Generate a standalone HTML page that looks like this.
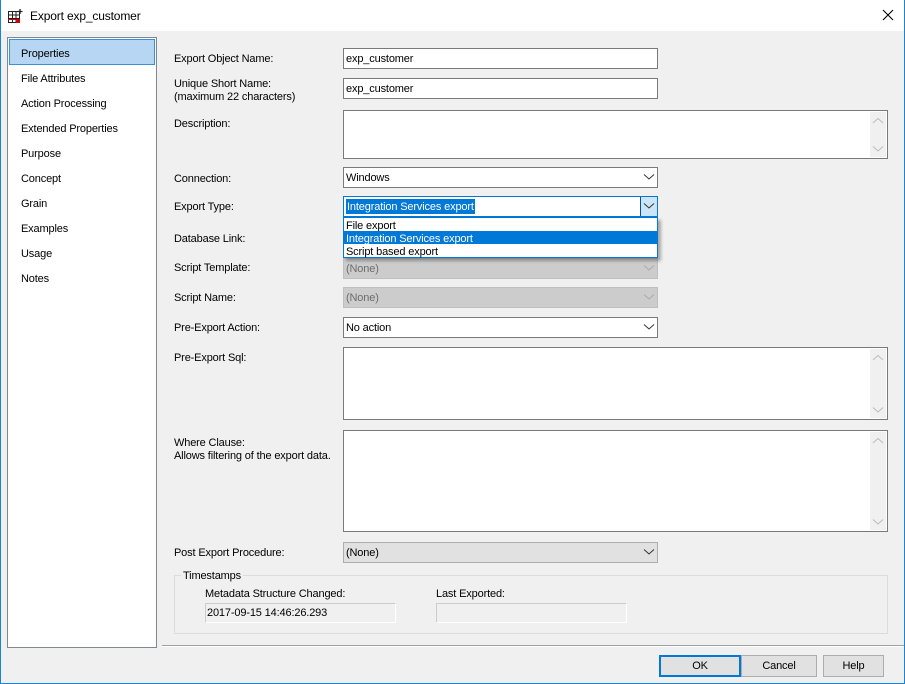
<!DOCTYPE html>
<html><head><style>
body{margin:0;width:905px;height:684px;overflow:hidden;font-family:"Liberation Sans",sans-serif;font-size:11px;letter-spacing:-0.15px;color:#000;}
#win{position:absolute;left:0;top:0;width:905px;height:684px;background:#f0f0f0;}
#bd{position:absolute;left:0;top:0;width:903px;height:683px;border:1px solid #1883d7;border-top:none;pointer-events:none;}
.a{position:absolute;}
#title{left:0;top:0;width:905px;height:31px;background:#fff;}
.lbl{position:absolute;left:174px;white-space:nowrap;margin-top:1px;}
.inp{position:absolute;left:343px;width:313px;height:19px;border:1px solid #7a7a7a;background:#fff;box-sizing:content-box;}
.inp span{position:absolute;left:2px;top:4px;}
.ta{position:absolute;left:343px;width:543px;border:1px solid #7a7a7a;background:#fff;}
.sb{position:absolute;right:1px;top:1px;bottom:1px;width:16px;background:#f0f0f0;}
.dis{background:#ccc;border-color:#bfbfbf;color:#6d6d6d;}
.item{position:absolute;left:21px;margin-top:2px;}
.btn{position:absolute;top:655px;height:20px;border:1px solid #adadad;background:#e1e1e1;text-align:center;line-height:21px;}
.t1{margin-top:1px}
</style></head><body>
<div id="win">
<div class="a" id="title"></div>
<svg class="a" style="left:8px;top:8px" width="16" height="16" viewBox="0 0 16 16"><g fill="none" stroke="#222" stroke-width="1"><rect x="0.5" y="3.5" width="11" height="11"/><path d="M4.5 3.5v11M8 3.5v11M0.5 7h11M0.5 10.5h11"/></g><rect x="8" y="11" width="4" height="4" fill="#c00"/><rect x="0" y="11" width="8" height="1" fill="#c00"/><path d="M12 1v5M9.5 3.5h5" stroke="#222" stroke-width="1.3"/></svg>
<div class="a" style="left:30px;top:9px;font-size:12px">Export exp_customer</div>
<svg class="a" style="left:882px;top:9px" width="12" height="12"><path d="M1 1L11 11M11 1L1 11" stroke="#000" stroke-width="1.1"/></svg>

<div class="a" style="left:7px;top:37px;width:148px;height:609px;border:1px solid #828790;background:#fff"></div>
<div class="a" style="left:9px;top:39px;width:144px;height:24px;border:1px solid #3d8fd8;background:#b7d6f3"></div>
<div class="item" style="top:46px">Properties</div>
<div class="item" style="top:71px">File Attributes</div>
<div class="item" style="top:96px">Action Processing</div>
<div class="item" style="top:121px">Extended Properties</div>
<div class="item" style="top:146px">Purpose</div>
<div class="item" style="top:171px">Concept</div>
<div class="item" style="top:196px">Grain</div>
<div class="item" style="top:221px">Examples</div>
<div class="item" style="top:246px">Usage</div>
<div class="item" style="top:271px">Notes</div>

<div class="lbl" style="top:52px">Export Object Name:</div>
<div class="inp" style="top:48px"><span>exp_customer</span></div>
<div class="lbl" style="top:77px;line-height:13px">Unique Short Name:<br>(maximum 22 characters)</div>
<div class="inp" style="top:78px"><span>exp_customer</span></div>
<div class="lbl" style="top:117px">Description:</div>
<div class="ta" style="top:110px;height:47px"><div class="sb"></div></div>

<div class="lbl" style="top:172px">Connection:</div>
<div class="inp" style="top:167px"><span>Windows</span></div>
<div class="lbl" style="top:200px">Export Type:</div>
<div class="inp" style="top:196px;border-color:#0078d7"><span style="background:#0078d7;color:#fff;left:2px;top:2px;padding:2px 1px 1px">Integration Services export</span>
<div class="a" style="right:0;top:0;width:16px;height:19px;background:#cce4f7;border-left:1px solid #005499"></div></div>
<div class="lbl" style="top:232px">Database Link:</div>
<div class="lbl" style="top:261px">Script Template:</div>
<div class="inp dis" style="top:258px"><span>(None)</span></div>
<div class="lbl" style="top:291px">Script Name:</div>
<div class="inp dis" style="top:287px"><span>(None)</span></div>
<div class="a" style="left:343px;top:217px;width:313px;height:39px;border:1px solid #0078d7;background:#fff;box-shadow:3px 3px 3px rgba(0,0,0,.3)">
<div class="a" style="left:2px;top:2px">File export</div>
<div class="a" style="left:0;top:13px;width:313px;height:13px;background:#0078d7"></div>
<div class="a" style="left:2px;top:15px;color:#fff">Integration Services export</div>
<div class="a" style="left:2px;top:28px">Script based export</div></div>

<div class="lbl" style="top:321px">Pre-Export Action:</div>
<div class="inp" style="top:317px"><span>No action</span></div>
<div class="lbl" style="top:351px">Pre-Export Sql:</div>
<div class="ta" style="top:347px;height:71px"><div class="sb"></div></div>
<div class="lbl" style="top:436px;line-height:13px">Where Clause:<br>Allows filtering of the export data.</div>
<div class="ta" style="top:430px;height:100px"><div class="sb"></div></div>
<div class="lbl" style="top:546px">Post Export Procedure:</div>
<div class="inp" style="top:542px;background:#e1e1e1;border-color:#adadad"><span>(None)</span></div>

<div class="a" style="left:174px;top:575px;width:712px;height:57px;border:1px solid #dcdcdc"></div>
<div class="a" style="left:181px;top:570px;background:#f0f0f0;padding:0 2px">Timestamps</div>
<div class="a" style="left:205px;top:588px">Metadata Structure Changed:</div>
<div class="a" style="left:205px;top:603px;width:189px;height:18px;border:1px solid #ccc;border-right-color:#fff;border-bottom-color:#fff"><span class="a" style="left:1px;top:3px">2017-09-15 14:46:26.293</span></div>
<div class="a" style="left:436px;top:588px">Last Exported:</div>
<div class="a" style="left:436px;top:603px;width:189px;height:18px;border:1px solid #ccc;border-right-color:#fff;border-bottom-color:#fff"></div>

<div class="a" style="left:162px;top:645px;width:742px;height:1px;background:#a0a0a0;border-bottom:1px solid #fff"></div>
<div class="btn" style="left:659px;width:78px;border:2px solid #0078d7;height:18px;line-height:19px">OK</div>
<div class="btn" style="left:741px;width:74px">Cancel</div>
<div class="btn" style="left:823px;width:59px">Help</div>

<svg class="a" style="left:643px;top:173px" width="12" height="8"><path d="M1 1.5L6 6L11 1.5" fill="none" stroke="#333"/></svg>
<svg class="a" style="left:643px;top:202px" width="12" height="8"><path d="M1 1.5L6 6L11 1.5" fill="none" stroke="#333"/></svg>
<svg class="a" style="left:643px;top:264px" width="12" height="8"><path d="M1 1.5L6 6L11 1.5" fill="none" stroke="#aaa"/></svg>
<svg class="a" style="left:643px;top:293px" width="12" height="8"><path d="M1 1.5L6 6L11 1.5" fill="none" stroke="#aaa"/></svg>
<svg class="a" style="left:643px;top:323px" width="12" height="8"><path d="M1 1.5L6 6L11 1.5" fill="none" stroke="#333"/></svg>
<svg class="a" style="left:643px;top:548px" width="12" height="8"><path d="M1 1.5L6 6L11 1.5" fill="none" stroke="#333"/></svg>
<svg class="a" style="left:872px;top:117px" width="12" height="8"><path d="M1 6L6 1.5L11 6" fill="none" stroke="#bbb"/></svg>
<svg class="a" style="left:872px;top:145px" width="12" height="8"><path d="M1 1.5L6 6L11 1.5" fill="none" stroke="#bbb"/></svg>
<svg class="a" style="left:872px;top:354px" width="12" height="8"><path d="M1 6L6 1.5L11 6" fill="none" stroke="#bbb"/></svg>
<svg class="a" style="left:872px;top:406px" width="12" height="8"><path d="M1 1.5L6 6L11 1.5" fill="none" stroke="#bbb"/></svg>
<svg class="a" style="left:872px;top:437px" width="12" height="8"><path d="M1 6L6 1.5L11 6" fill="none" stroke="#bbb"/></svg>
<svg class="a" style="left:872px;top:518px" width="12" height="8"><path d="M1 1.5L6 6L11 1.5" fill="none" stroke="#bbb"/></svg>
</div>
<div id="bd"></div>
</body></html>
